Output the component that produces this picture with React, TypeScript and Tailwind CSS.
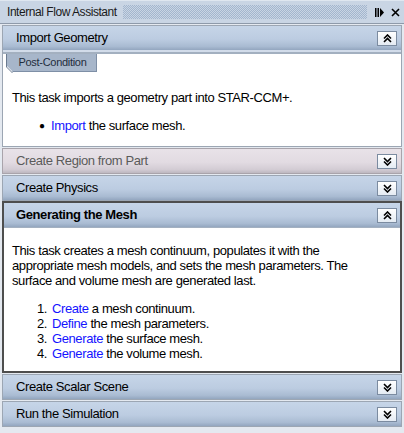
import React from "react";

function Chevrons({ up }: { up: boolean }) {
  return (
    <svg width="9" height="9" viewBox="0 0 9 9" className={up ? "" : "rotate-180"}>
      <path d="M1 4.5 L4.5 1 L8 4.5" fill="none" stroke="#000" strokeWidth="1.6" />
      <path d="M1 8 L4.5 4.5 L8 8" fill="none" stroke="#000" strokeWidth="1.6" />
    </svg>
  );
}

function Btn({ up }: { up: boolean }) {
  return (
    <div className="w-[20px] h-[15px] border border-[#7b8ba0] bg-[linear-gradient(to_bottom,#ffffff,#e4ebf3)] flex items-center justify-center">
      <Chevrons up={up} />
    </div>
  );
}

function Header({
  title,
  up,
  variant = "blue",
  bold = false,
}: {
  title: string;
  up: boolean;
  variant?: "blue" | "pink";
  bold?: boolean;
}) {
  const bg =
    variant === "blue"
      ? "bg-[linear-gradient(to_bottom,#c6d5e8_0%,#bccce1_55%,#a9bbd2_85%,#93a6bf_100%)]"
      : "bg-[linear-gradient(to_bottom,#e8e2e8_0%,#e2dbe2_55%,#d3ccd4_85%,#bdb8c0_100%)]";
  return (
    <div className={`h-[24px] flex items-center justify-between ${bold ? "pl-[12px] pr-[3px]" : "pl-[13px] pr-[4px]"} ${bg}`}>
      <span
        className={`text-[13px] tracking-[-0.4px] ${bold ? "font-bold text-black" : variant === "pink" ? "text-[#5a5a5a]" : "text-black"}`}
      >
        {title}
      </span>
      <Btn up={up} />
    </div>
  );
}

export default function App() {
  return (
    <div className="w-[404px] h-[433px] bg-[#e4e9f0] overflow-hidden font-['Liberation_Sans',Arial,sans-serif] text-black">
      {/* title bar */}
      <div className="h-[23px] bg-[#c9d5e4] border-t border-[#dfe7f0] flex items-center">
        <span className="pl-[7px] text-[12px] tracking-[-0.45px] text-[#1a1a1a] whitespace-nowrap">Internal Flow Assistant</span>
        <div className="ml-[6px] w-[244px] h-[14px] bg-[repeating-conic-gradient(#a3b6ce_0_25%,transparent_0_50%)] bg-[length:2px_2px]" />
        <div className="ml-[8px] flex items-center gap-[7px]">
          <svg width="9" height="9" viewBox="0 0 9 9">
            <rect x="0" y="0" width="1.5" height="9" fill="#000" />
            <rect x="2.5" y="0" width="1.5" height="9" fill="#000" />
            <path d="M5 0 L9 4.5 L5 9 Z" fill="#000" />
          </svg>
          <svg width="9" height="9" viewBox="0 0 9 9">
            <path d="M1 1 L8 8 M8 1 L1 8" stroke="#000" strokeWidth="1.6" />
          </svg>
        </div>
      </div>
      <div className="h-[1px] bg-[#8e9aaa]" />
      <div className="px-[2px] pt-[1px] flex flex-col">
        {/* Import Geometry */}
        <div className="border border-[#9ca6b3] bg-white">
          <Header title="Import Geometry" up={true} />
          <div className="h-[2px] bg-[#d2dcea]" />
          <div className="h-[2px] bg-[#a3b0c0]" />
          <div className="h-[92px] bg-white relative">
            <div className="absolute left-[4px] top-[0px] w-[90px] h-[18px] bg-[#a7b6ca] border-r border-b border-[#7e8fa6] [clip-path:polygon(0_0,100%_0,100%_100%,6px_100%,0_calc(100%-6px))] flex items-center justify-center">
              <span className="text-[11px] tracking-[-0.3px] text-[#1f2d3d] pl-[2px]">Post-Condition</span>
            </div>
            <svg className="absolute left-[3px] top-[0px]" width="8" height="20" viewBox="0 0 8 20">
              <path d="M0.5 0 L0.5 13 L6.5 19" fill="none" stroke="#6b7b90" strokeWidth="1" />
            </svg>
            <div className="pt-[36px] pl-[9px] text-[13px] leading-[15px] tracking-[-0.4px]">
              <p>This task imports a geometry part into STAR-CCM+.</p>
              <div className="mt-[13px] flex items-center pl-[27px]">
                <span className="w-[12px] text-[10px]">●</span>
                <span>
                  <span className="text-[#1414ff]">Import</span> the surface mesh.
                </span>
              </div>
            </div>
          </div>
        </div>
        {/* Create Region */}
        <div className="mt-[1px] border border-[#a9a4ab]">
          <Header title="Create Region from Part" up={false} variant="pink" />
        </div>
        {/* Create Physics */}
        <div className="mt-[1px] border border-[#9ca6b3]">
          <Header title="Create Physics" up={false} />
        </div>
        {/* Generating the Mesh */}
        <div className="border-2 border-[#4e4e4e] bg-white">
          <Header title="Generating the Mesh" up={true} bold />
          <div className="h-[1px] bg-[#a3b0c0]" />
          <div className="h-[143px] pt-[15px] pl-[8px] text-[13px] leading-[15px] tracking-[-0.4px]">
            <p>
              This task creates a mesh continuum, populates it with the
              <br />
              appropriate mesh models, and sets the mesh parameters. The
              <br />
              surface and volume mesh are generated last.
            </p>
            <ol className="mt-[13px] pl-[25px]">
              <li className="flex">
                <span className="w-[15px]">1.</span>
                <span>
                  <span className="text-[#1414ff]">Create</span> a mesh continuum.
                </span>
              </li>
              <li className="flex">
                <span className="w-[15px]">2.</span>
                <span>
                  <span className="text-[#1414ff]">Define</span> the mesh parameters.
                </span>
              </li>
              <li className="flex">
                <span className="w-[15px]">3.</span>
                <span>
                  <span className="text-[#1414ff]">Generate</span> the surface mesh.
                </span>
              </li>
              <li className="flex">
                <span className="w-[15px]">4.</span>
                <span>
                  <span className="text-[#1414ff]">Generate</span> the volume mesh.
                </span>
              </li>
            </ol>
          </div>
        </div>
        <div className="mt-[1px] border border-[#9ca6b3]">
          <Header title="Create Scalar Scene" up={false} />
        </div>
        <div className="mt-[1px] border border-[#9ca6b3]">
          <Header title="Run the Simulation" up={false} />
        </div>
      </div>
    </div>
  );
}
